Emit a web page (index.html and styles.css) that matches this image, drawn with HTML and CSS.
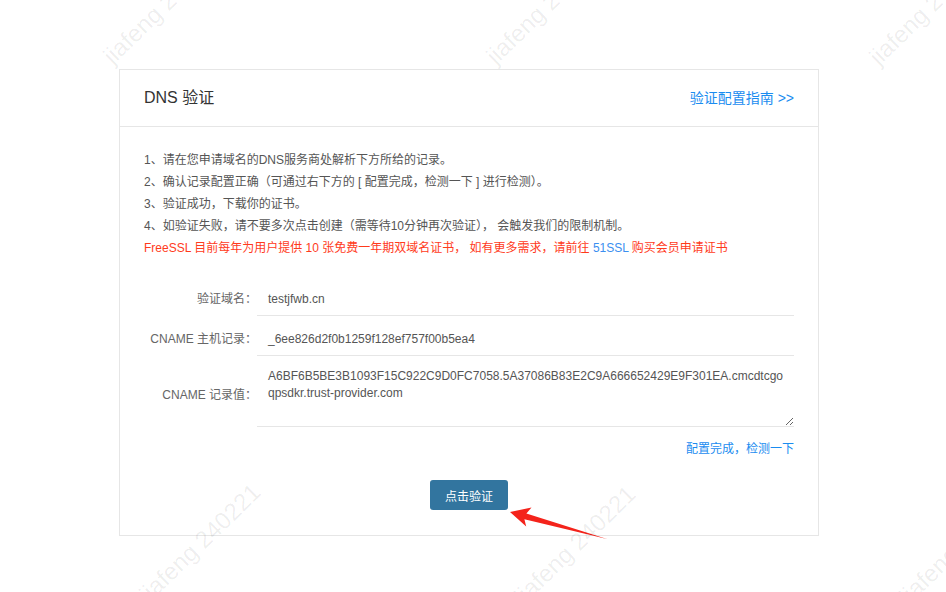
FILE: index.html
```html
<!DOCTYPE html>
<html lang="zh-CN">
<head>
<meta charset="utf-8">
<title>DNS 验证</title>
<link rel="stylesheet" href="styles.css">
</head>
<body>
<div class="page">
  <div class="card">
    <div class="card-header">
      <h2 class="card-title">DNS 验证</h2>
      <a class="guide-link" href="#">验证配置指南 &gt;&gt;</a>
    </div>
    <div class="card-body">
      <ol class="steps">
        <li>1、请在您申请域名的DNS服务商处解析下方所给的记录。</li>
        <li>2、确认记录配置正确（可通过右下方的 [ 配置完成，检测一下 ] 进行检测）。</li>
        <li>3、验证成功，下载你的证书。</li>
        <li>4、如验证失败，请不要多次点击创建（需等待10分钟再次验证）， 会触发我们的限制机制。</li>
        <li class="notice">FreeSSL 目前每年为用户提供 10 张免费一年期双域名证书， 如有更多需求，请前往 <a class="notice-link" href="#">51SSL</a> 购买会员申请证书</li>
      </ol>
      <div class="form">
        <div class="form-row">
          <div class="form-label">验证域名：</div>
          <div class="form-value">testjfwb.cn</div>
        </div>
        <div class="form-row">
          <div class="form-label">CNAME 主机记录：</div>
          <div class="form-value">_6ee826d2f0b1259f128ef757f00b5ea4</div>
        </div>
        <div class="form-row form-row-area">
          <div class="form-label form-label-area">CNAME 记录值：</div>
          <textarea class="form-textarea" readonly>A6BF6B5BE3B1093F15C922C9D0FC7058.5A37086B83E2C9A666652429E9F301EA.cmcdtcgoqpsdkr.trust-provider.com</textarea>
        </div>
      </div>
      <div class="check-line"><a class="check-link" href="#">配置完成，检测一下</a></div>
      <div class="actions"><button class="btn-verify" type="button">点击验证</button></div>
    </div>
  </div>
</div>

<svg class="arrow" viewBox="0 0 946 592" width="946" height="592" aria-hidden="true">
  <polygon points="510,512 531.5,507.5 526.4,513.6 607,539 524.4,519.2 526.2,526.5" fill="#f4231b"/>
</svg>

<div class="watermarks" aria-hidden="true">
  <span class="wm wm-1">jiafeng 240221</span>
  <span class="wm wm-2">jiafeng 240221</span>
  <span class="wm wm-3">jiafeng 240221</span>
  <span class="wm wm-4">jiafeng 240221</span>
  <span class="wm wm-5">jiafeng 240221</span>
  <span class="wm wm-6">jiafeng 240221</span>
</div>
</body>
</html>
```

FILE: styles.css
```css
* { box-sizing: border-box; }

html, body {
  margin: 0;
  padding: 0;
  background: #ffffff;
  width: 946px;
  height: 592px;
  overflow: hidden;
}

body {
  position: relative;
  font-family: "Liberation Sans", "Noto Sans CJK SC", sans-serif;
  color: #555555;
}

.page {
  padding: 69px 0 0 119px;
}

.card {
  width: 700px;
  border: 1px solid #e6e6e6;
  background: transparent;
}

.card-header {
  height: 57px;
  border-bottom: 1px solid #e6e6e6;
  padding: 0 24px;
  display: flex;
  align-items: center;
  justify-content: space-between;
}

.card-title {
  margin: 0;
  font-size: 16px;
  font-weight: normal;
  color: #333333;
  line-height: 20px;
}

.guide-link {
  font-size: 14px;
  color: #1a8cf0;
  text-decoration: none;
  line-height: 20px;
}

.card-body {
  padding: 22px 24px 25px 24px;
}

.steps {
  list-style: none;
  margin: 0;
  padding: 0;
  font-size: 12px;
  line-height: 22px;
  color: #555555;
}

.notice {
  color: #ff3b1c;
}

.notice-link {
  color: #3b8ff0;
  text-decoration: none;
}

.form {
  margin-top: 17px;
  font-size: 12px;
}

.form-row {
  display: flex;
}

.form-label {
  width: 113px;
  flex: none;
  text-align: right;
  color: #666666;
  line-height: 17px;
  padding: 15px 0 8px;
  white-space: nowrap;
}

.form-value {
  flex: 1;
  line-height: 17px;
  padding: 15px 0 7px 11px;
  border-bottom: 1px solid #e6e6e6;
  color: #555555;
}

.form-label-area {
  align-self: center;
  padding: 7px 0 0;
}

.form-textarea {
  flex: 1;
  height: 71px;
  margin: 0;
  padding: 12px 8px 0 11px;
  border: none;
  border-bottom: 1px solid #e6e6e6;
  outline: none;
  font-family: "Liberation Sans", "Noto Sans CJK SC", sans-serif;
  font-size: 12px;
  line-height: 17px;
  color: #555555;
  resize: vertical;
  background: transparent;
}

.check-line {
  margin-top: 14px;
  text-align: right;
  font-size: 12px;
  line-height: 17px;
}

.check-link {
  color: #1a8cf0;
  text-decoration: none;
}

.actions {
  margin-top: 22px;
  display: flex;
  justify-content: center;
}

.btn-verify {
  width: 78px;
  height: 30px;
  border: none;
  border-radius: 3px;
  background: #32759f;
  color: #ffffff;
  font-family: "Liberation Sans", "Noto Sans CJK SC", sans-serif;
  font-size: 12px;
  padding: 0;
  cursor: pointer;
}

.arrow {
  position: absolute;
  left: 0;
  top: 0;
  pointer-events: none;
}

.watermarks {
  position: absolute;
  left: 0;
  top: 0;
  width: 946px;
  height: 592px;
  overflow: hidden;
  pointer-events: none;
}

.wm {
  position: absolute;
  font-family: "Liberation Sans", sans-serif;
  font-size: 24px;
  line-height: 24px;
  color: rgba(0, 0, 0, 0.07);
  white-space: nowrap;
  transform: translate(-50%, -50%) rotate(-44deg);
}

.wm-1 { left: 164px; top: 5px; }
.wm-2 { left: 547px; top: 5px; }
.wm-3 { left: 930px; top: 6px; }
.wm-4 { left: 200px; top: 543px; }
.wm-5 { left: 575px; top: 545px; }
.wm-6 { left: 960px; top: 545px; }
```
